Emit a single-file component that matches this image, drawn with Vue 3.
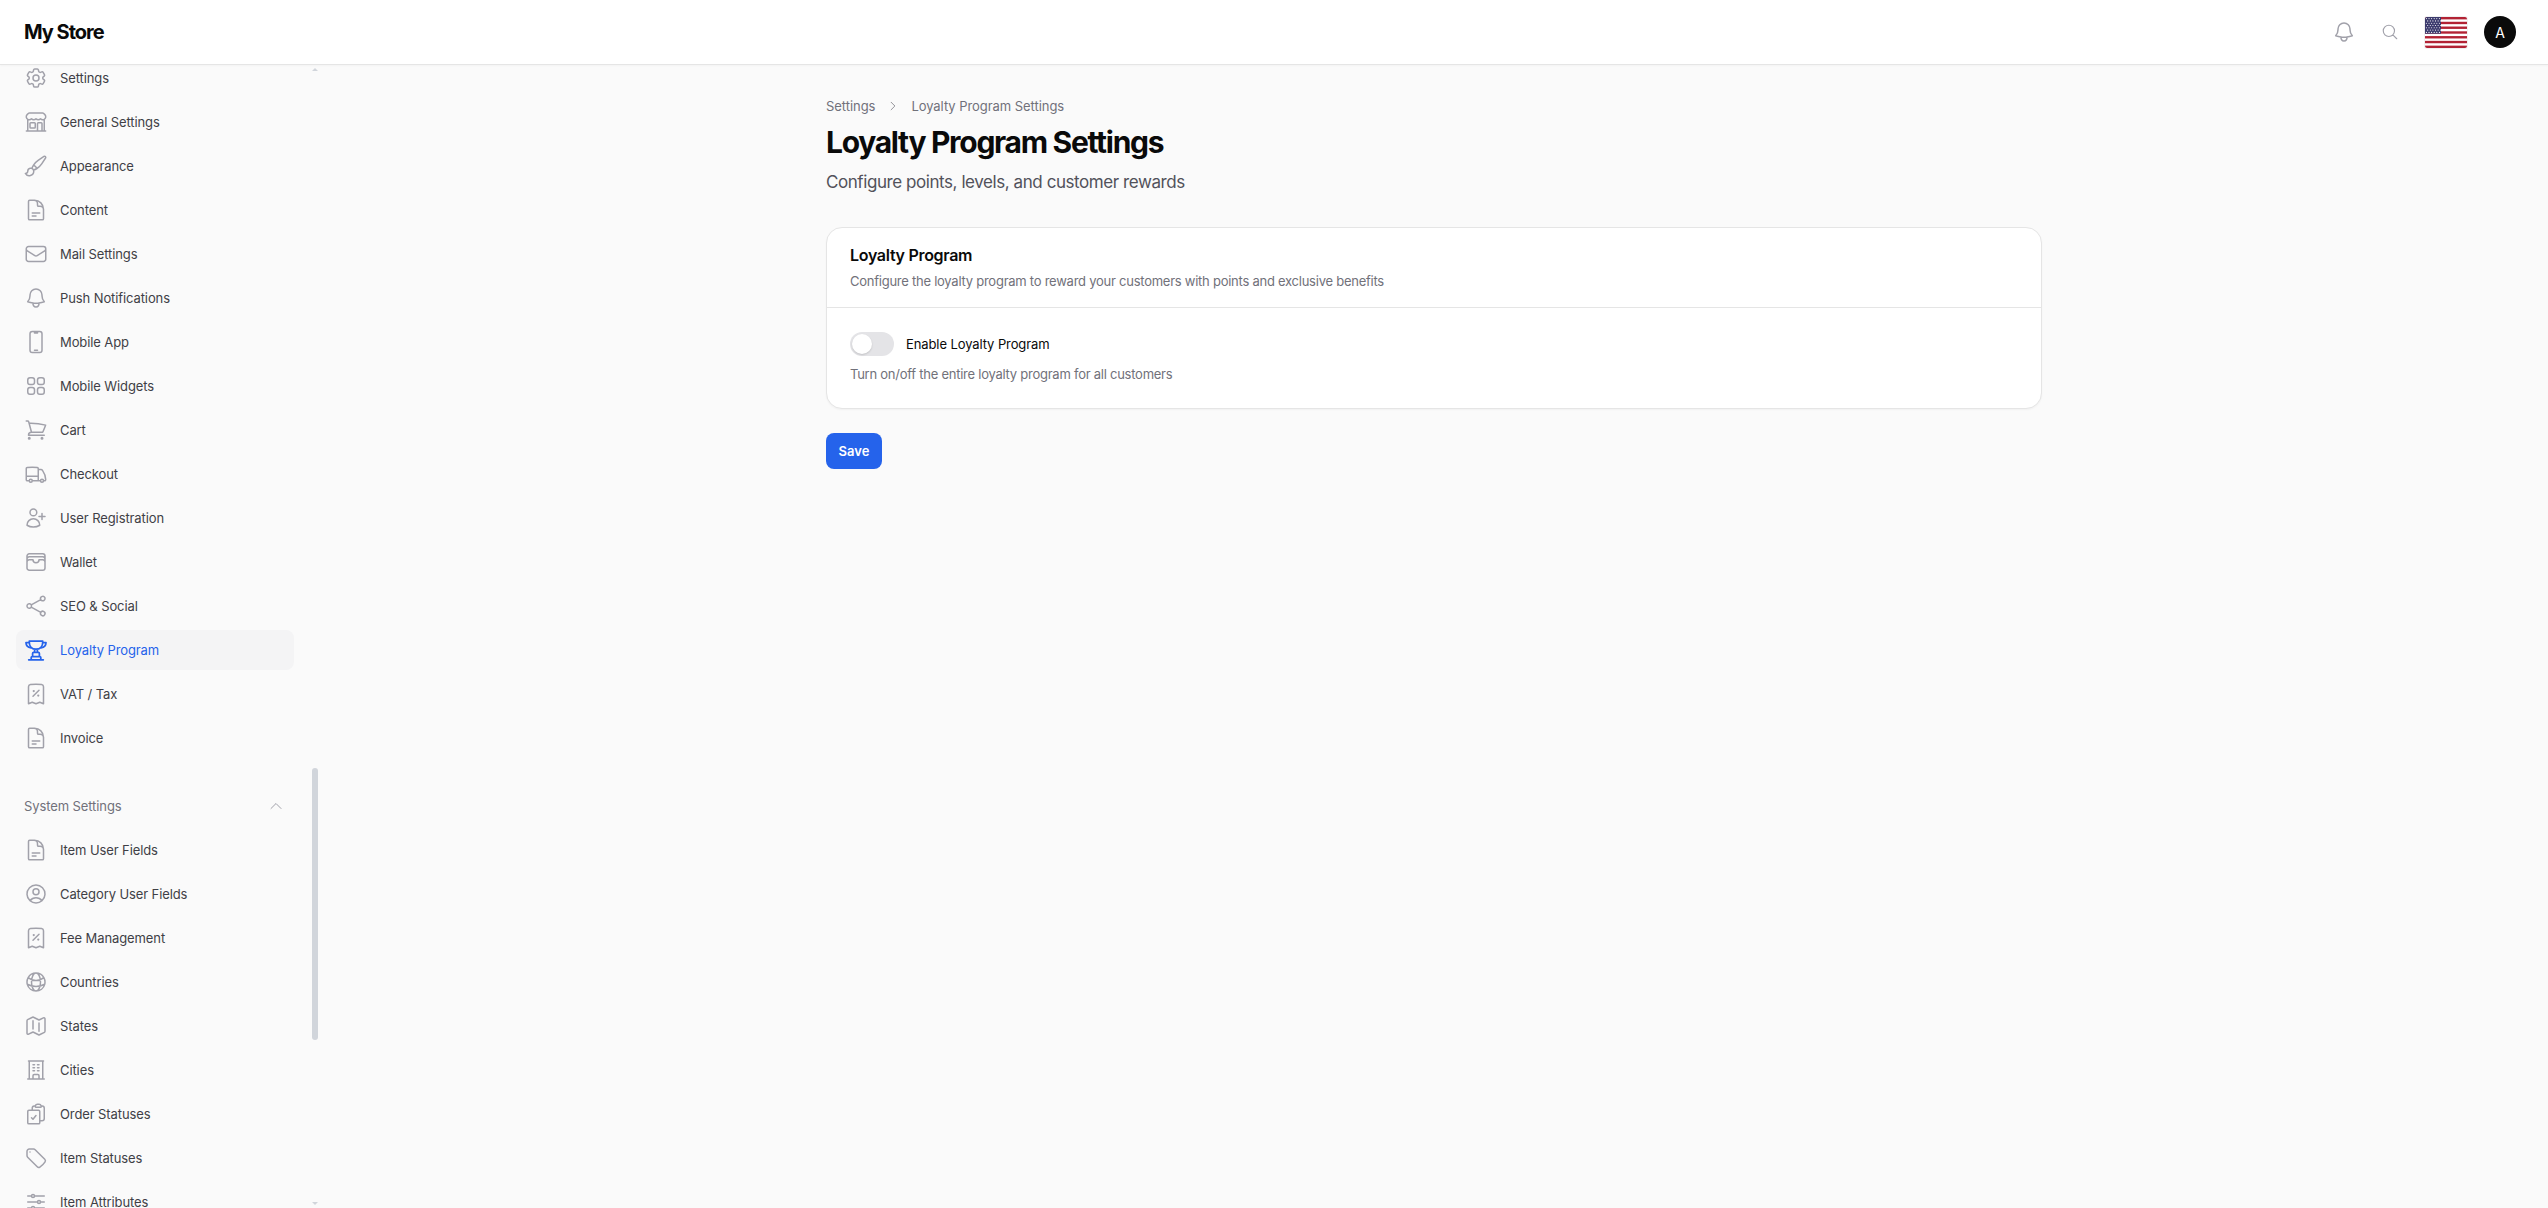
<template>
  <div class="layout">
    <header class="topbar">
      <div class="brand">My Store</div>
      <div class="top-actions">
        <svg class="icon bell" viewBox="0 0 24 24"><path :d="icons.bell[0]" /></svg>
        <svg class="icon search" viewBox="0 0 24 24"><path d="m21 21-5.197-5.197m0 0A7.5 7.5 0 1 0 5.196 5.196a7.5 7.5 0 0 0 10.607 10.607Z" /></svg>
        <svg class="flag" viewBox="0 0 42 31" preserveAspectRatio="none">
          <rect width="42" height="31" fill="#fff" />
          <rect v-for="n in 7" :key="n" x="0" :y="(n - 1) * 4.77" width="42" height="2.38" fill="#b22234" />
          <rect width="16" height="16.7" fill="#3c3b6e" />
          <g fill="#fff">
            <template v-for="r in 7" :key="r">
              <circle v-for="c in 6" :key="c" :cx="1.4 + (c - 1) * 2.6 + (r % 2 ? 0 : 1.3)" :cy="1.6 + (r - 1) * 2.3" r="0.55" />
            </template>
          </g>
        </svg>
        <div class="avatar">A</div>
      </div>
    </header>

    <div class="body-row">
      <aside class="sidebar">
        <nav class="nav">
          <a
            v-for="item in settingsItems"
            :key="item.label"
            class="nav-item"
            :class="{ active: item.active }"
          >
            <svg class="icon" viewBox="0 0 24 24"><path v-for="d in item.paths" :key="d" :d="d" /></svg>
            <span>{{ item.label }}</span>
          </a>

          <div class="section-title">
            <span>System Settings</span>
            <svg class="icon chevron" viewBox="0 0 24 24"><path d="m4.5 15.75 7.5-7.5 7.5 7.5" /></svg>
          </div>

          <a v-for="item in systemItems" :key="item.label" class="nav-item">
            <svg class="icon" viewBox="0 0 24 24"><path v-for="d in item.paths" :key="d" :d="d" /></svg>
            <span>{{ item.label }}</span>
          </a>
        </nav>

        <!-- fake scrollbar, sits over the list -->
        <div class="scroll-up"></div>
        <div class="scroll-thumb"></div>
        <div class="scroll-down"></div>
      </aside>

      <main class="main">
        <div class="breadcrumb">
          <span>Settings</span>
          <svg class="icon crumb-sep" viewBox="0 0 24 24"><path d="m8.25 4.5 7.5 7.5-7.5 7.5" /></svg>
          <span>Loyalty Program Settings</span>
        </div>
        <h1 class="page-title">Loyalty Program Settings</h1>
        <p class="page-sub">Configure points, levels, and customer rewards</p>

        <section class="card">
          <div class="card-head">
            <h2>Loyalty Program</h2>
            <p>Configure the loyalty program to reward your customers with points and exclusive benefits</p>
          </div>
          <div class="card-body">
            <div class="switch-row">
              <button class="switch" :class="{ on: enabled }" @click="enabled = !enabled">
                <span class="knob"></span>
              </button>
              <span class="switch-label">Enable Loyalty Program</span>
            </div>
            <p class="help">Turn on/off the entire loyalty program for all customers</p>
          </div>
        </section>

        <button class="save">Save</button>
      </main>
    </div>
  </div>
</template>

<script setup>
import { ref } from 'vue'

const enabled = ref(false)

const icons = {
  cog: ['M9.594 3.94c.09-.542.56-.94 1.11-.94h2.593c.55 0 1.02.398 1.11.94l.213 1.281c.063.374.313.686.645.87.074.04.147.083.22.127.325.196.72.257 1.075.124l1.217-.456a1.125 1.125 0 0 1 1.37.49l1.296 2.247a1.125 1.125 0 0 1-.26 1.431l-1.003.827c-.293.241-.438.613-.43.992a7.723 7.723 0 0 1 0 .255c-.008.378.137.75.43.991l1.004.827c.424.35.534.955.26 1.43l-1.298 2.247a1.125 1.125 0 0 1-1.369.491l-1.217-.456c-.355-.133-.75-.072-1.076.124a6.47 6.47 0 0 1-.22.128c-.331.183-.581.495-.644.869l-.213 1.281c-.09.543-.56.94-1.11.94h-2.594c-.55 0-1.019-.398-1.11-.94l-.213-1.281c-.062-.374-.312-.686-.644-.87a6.52 6.52 0 0 1-.22-.127c-.325-.196-.72-.257-1.076-.124l-1.217.456a1.125 1.125 0 0 1-1.369-.49l-1.297-2.247a1.125 1.125 0 0 1 .26-1.431l1.004-.827c.292-.24.437-.613.43-.991a6.932 6.932 0 0 1 0-.255c.007-.38-.138-.751-.43-.992l-1.004-.827a1.125 1.125 0 0 1-.26-1.43l1.297-2.247a1.125 1.125 0 0 1 1.37-.491l1.216.456c.356.133.751.072 1.076-.124.072-.044.146-.086.22-.128.332-.183.582-.495.644-.869l.214-1.28Z', 'M15 12a3 3 0 1 1-6 0 3 3 0 0 1 6 0Z'],
  store: ['M13.5 21v-7.5a.75.75 0 0 1 .75-.75h3a.75.75 0 0 1 .75.75V21m-4.5 0H2.36m11.14 0H18m0 0h3.64m-1.39 0V9.349M3.75 21V9.349m0 0a3.001 3.001 0 0 0 3.75-.615A2.993 2.993 0 0 0 9.75 9.75c.896 0 1.7-.393 2.25-1.016a2.993 2.993 0 0 0 2.25 1.016c.896 0 1.7-.393 2.25-1.015a3.001 3.001 0 0 0 3.75.614m-16.5 0a3.004 3.004 0 0 1-.621-4.72l1.189-1.19A1.5 1.5 0 0 1 5.378 3h13.243a1.5 1.5 0 0 1 1.06.44l1.19 1.189a3 3 0 0 1-.621 4.72M6.75 18h3.75a.75.75 0 0 0 .75-.75V13.5a.75.75 0 0 0-.75-.75H6.75a.75.75 0 0 0-.75.75v3.75c0 .414.336.75.75.75Z'],
  brush: ['M9.53 16.122a3 3 0 0 0-5.78 1.128 2.25 2.25 0 0 1-2.4 2.245 4.5 4.5 0 0 0 8.4-2.245c0-.399-.078-.78-.22-1.128Zm0 0a15.998 15.998 0 0 0 3.388-1.62m-5.043-.025a15.994 15.994 0 0 1 1.622-3.395m3.42 3.42a15.995 15.995 0 0 0 4.764-4.648l3.876-5.814a1.151 1.151 0 0 0-1.597-1.597L14.146 6.32a15.996 15.996 0 0 0-4.649 4.763m3.42 3.42a6.776 6.776 0 0 0-3.42-3.42'],
  doc: ['M19.5 14.25v-2.625a3.375 3.375 0 0 0-3.375-3.375h-1.5A1.125 1.125 0 0 1 13.5 7.125v-1.5a3.375 3.375 0 0 0-3.375-3.375H8.25m0 12.75h7.5m-7.5 3H12M10.5 2.25H5.625c-.621 0-1.125.504-1.125 1.125v17.25c0 .621.504 1.125 1.125 1.125h12.75c.621 0 1.125-.504 1.125-1.125V11.25a9 9 0 0 0-9-9Z'],
  mail: ['M21.75 6.75v10.5a2.25 2.25 0 0 1-2.25 2.25h-15a2.25 2.25 0 0 1-2.25-2.25V6.75m19.5 0A2.25 2.25 0 0 0 19.5 4.5h-15a2.25 2.25 0 0 0-2.25 2.25m19.5 0v.243a2.25 2.25 0 0 1-1.07 1.916l-7.5 4.615a2.25 2.25 0 0 1-2.36 0L3.32 8.91a2.25 2.25 0 0 1-1.07-1.916V6.75'],
  bell: ['M14.857 17.082a23.848 23.848 0 0 0 5.454-1.31A8.967 8.967 0 0 1 18 9.75V9A6 6 0 0 0 6 9v.75a8.967 8.967 0 0 1-2.312 6.022c1.733.64 3.56 1.085 5.455 1.31m5.714 0a24.255 24.255 0 0 1-5.714 0m5.714 0a3 3 0 1 1-5.714 0'],
  phone: ['M10.5 1.5H8.25A2.25 2.25 0 0 0 6 3.75v16.5a2.25 2.25 0 0 0 2.25 2.25h7.5A2.25 2.25 0 0 0 18 20.25V3.75a2.25 2.25 0 0 0-2.25-2.25H13.5m-3 0V3h3V1.5m-3 0h3m-3 18.75h3'],
  widgets: ['M3.75 6A2.25 2.25 0 0 1 6 3.75h2.25A2.25 2.25 0 0 1 10.5 6v2.25a2.25 2.25 0 0 1-2.25 2.25H6a2.25 2.25 0 0 1-2.25-2.25V6ZM3.75 15.75A2.25 2.25 0 0 1 6 13.5h2.25a2.25 2.25 0 0 1 2.25 2.25V18a2.25 2.25 0 0 1-2.25 2.25H6A2.25 2.25 0 0 1 3.75 18v-2.25ZM13.5 6a2.25 2.25 0 0 1 2.25-2.25H18A2.25 2.25 0 0 1 20.25 6v2.25A2.25 2.25 0 0 1 18 10.5h-2.25a2.25 2.25 0 0 1-2.25-2.25V6ZM13.5 15.75a2.25 2.25 0 0 1 2.25-2.25H18a2.25 2.25 0 0 1 2.25 2.25V18A2.25 2.25 0 0 1 18 20.25h-2.25A2.25 2.25 0 0 1 13.5 18v-2.25Z'],
  cart: ['M2.25 3h1.386c.51 0 .955.343 1.087.835l.383 1.437M7.5 14.25a3 3 0 0 0-3 3h15.75m-12.75-3h11.218c1.121-2.3 2.1-4.684 2.924-7.138a60.114 60.114 0 0 0-16.536-1.84M7.5 14.25 5.106 5.272M6 20.25a.75.75 0 1 1-1.5 0 .75.75 0 0 1 1.5 0Zm12.75 0a.75.75 0 1 1-1.5 0 .75.75 0 0 1 1.5 0Z'],
  truck: ['M8.25 18.75a1.5 1.5 0 0 1-3 0m3 0a1.5 1.5 0 0 0-3 0m3 0h6m-9 0H3.375a1.125 1.125 0 0 1-1.125-1.125V14.25m17.25 4.5a1.5 1.5 0 0 1-3 0m3 0a1.5 1.5 0 0 0-3 0m3 0h1.125c.621 0 1.129-.504 1.09-1.124a17.902 17.902 0 0 0-3.213-9.193 2.056 2.056 0 0 0-1.58-.86H14.25M16.5 18.75h-2.25m0-11.177v-.958c0-.568-.422-1.048-.987-1.106a48.554 48.554 0 0 0-10.026 0 1.106 1.106 0 0 0-.987 1.106v7.635m12-6.677v6.677m0 4.5v-4.5m0 0h-12'],
  userPlus: ['M18 7.5v3m0 0v3m0-3h3m-3 0h-3m-2.25-4.125a3.375 3.375 0 1 1-6.75 0 3.375 3.375 0 0 1 6.75 0ZM3 19.235v-.11a6.375 6.375 0 0 1 12.75 0v.109A12.318 12.318 0 0 1 9.374 21c-2.331 0-4.512-.645-6.374-1.766Z'],
  wallet: ['M21 12a2.25 2.25 0 0 0-2.25-2.25H15a3 3 0 1 1-6 0H5.25A2.25 2.25 0 0 0 3 12m18 0v6a2.25 2.25 0 0 1-2.25 2.25H5.25A2.25 2.25 0 0 1 3 18v-6m18 0V9M3 12V9m18 0a2.25 2.25 0 0 0-2.25-2.25H5.25A2.25 2.25 0 0 0 3 9m18 0V6a2.25 2.25 0 0 0-2.25-2.25H5.25A2.25 2.25 0 0 0 3 6v3'],
  share: ['M7.217 10.907a2.25 2.25 0 1 0 0 2.186m0-2.186c.18.324.283.696.283 1.093s-.103.77-.283 1.093m0-2.186 9.566-5.314m-9.566 7.5 9.566 5.314m0 0a2.25 2.25 0 1 0 3.935 2.186 2.25 2.25 0 0 0-3.935-2.186Zm0-12.814a2.25 2.25 0 1 0 3.933-2.185 2.25 2.25 0 0 0-3.933 2.185Z'],
  trophy: ['M4.7 21.75h14.6M7.2 21.75v-2.2c0-.6.4-1 1-1h7.6c.6 0 1 .4 1 1v2.2M8.6 18.5v-3c0-.7.5-1.2 1.2-1.2h4.4c.7 0 1.2.5 1.2 1.2v3M10.1 14.3c.5-1 .7-2 .7-3.1M13.9 14.3c-.5-1-.7-2-.7-3.1M5.3 3h13.4v1.5c0 3.8-2.6 6.7-6.7 6.7s-6.7-2.9-6.7-6.7V3ZM5.3 4.5H2c0 2.9 2.1 5 5 5.4M18.7 4.5H22c0 2.9-2.1 5-5 5.4'],
  receipt: ['M9 14.25l6-6m4.5-3.493V21.75l-3.75-1.5-3.75 1.5-3.75-1.5-3.75 1.5V4.757c0-1.108.806-2.057 1.907-2.185a48.507 48.507 0 0 1 11.186 0c1.1.128 1.907 1.077 1.907 2.185ZM9.75 9h.008v.008H9.75V9Zm.375 0a.375.375 0 1 1-.75 0 .375.375 0 0 1 .75 0Zm4.125 4.5h.008v.008h-.008V13.5Zm.375 0a.375.375 0 1 1-.75 0 .375.375 0 0 1 .75 0Z'],
  userCircle: ['M17.982 18.725A7.488 7.488 0 0 0 12 15.75a7.488 7.488 0 0 0-5.982 2.975m11.963 0a9 9 0 1 0-11.963 0m11.963 0A8.966 8.966 0 0 1 12 21a8.966 8.966 0 0 1-5.982-2.275M15 9.75a3 3 0 1 1-6 0 3 3 0 0 1 6 0Z'],
  globe: ['M12 21a9.004 9.004 0 0 0 8.716-6.747M12 21a9.004 9.004 0 0 1-8.716-6.747M12 21c2.485 0 4.5-4.03 4.5-9S14.485 3 12 3m0 18c-2.485 0-4.5-4.03-4.5-9S9.515 3 12 3m0 0a8.997 8.997 0 0 1 7.843 4.582M12 3a8.997 8.997 0 0 0-7.843 4.582m15.686 0A11.953 11.953 0 0 1 12 10.5c-2.998 0-5.74-1.1-7.843-2.918m15.686 0A8.959 8.959 0 0 1 21 12c0 .778-.099 1.533-.284 2.253m0 0A17.919 17.919 0 0 1 12 16.5c-3.162 0-6.133-.815-8.716-2.247m0 0A9.015 9.015 0 0 1 3 12c0-1.605.42-3.113 1.157-4.418'],
  map: ['M9 6.75V15m6-6v8.25m.503 3.498 4.875-2.437c.381-.19.622-.58.622-1.006V4.82c0-.836-.88-1.38-1.628-1.006l-3.869 1.934c-.317.159-.69.159-1.006 0L9.503 3.252a1.125 1.125 0 0 0-1.006 0L3.622 5.689C3.24 5.88 3 6.27 3 6.695V19.18c0 .836.88 1.38 1.628 1.006l3.869-1.934c.317-.159.69-.159 1.006 0l4.994 2.497c.317.158.69.158 1.006 0Z'],
  office: ['M3.75 21h16.5M4.5 3h15M5.25 3v18m13.5-18v18M9 6.75h1.5m-1.5 3h1.5m-1.5 3h1.5m3-6H15m-1.5 3H15m-1.5 3H15M9 21v-3.375c0-.621.504-1.125 1.125-1.125h3.75c.621 0 1.125.504 1.125 1.125V21'],
  clipboard: ['M11.35 3.836c-.065.21-.1.433-.1.664 0 .414.336.75.75.75h4.5a.75.75 0 0 0 .75-.75 2.25 2.25 0 0 0-.1-.664m-5.8 0A2.251 2.251 0 0 1 13.5 2.25H15c1.012 0 1.867.668 2.15 1.586m-5.8 0c-.376.023-.75.05-1.124.08C9.095 4.01 8.25 4.973 8.25 6.108V8.25m8.9-4.414c.376.023.75.05 1.124.08 1.131.094 1.976 1.057 1.976 2.192V16.5A2.25 2.25 0 0 1 18 18.75h-2.25m-7.5-10.5H4.875c-.621 0-1.125.504-1.125 1.125v11.25c0 .621.504 1.125 1.125 1.125h9.75c.621 0 1.125-.504 1.125-1.125V18.75m-7.5-10.5h6.375c.621 0 1.125.504 1.125 1.125v9.375m-8.25-3 1.5 1.5 3-3.75'],
  tag: ['M9.568 3H5.25A2.25 2.25 0 0 0 3 5.25v4.318c0 .597.237 1.17.659 1.591l9.581 9.581c.699.699 1.78.872 2.607.33a18.095 18.095 0 0 0 5.223-5.223c.542-.827.369-1.908-.33-2.607L11.16 3.66A2.25 2.25 0 0 0 9.568 3Z', 'M6 6h.008v.008H6V6Z'],
  sliders: ['M10.5 6h9.75M10.5 6a1.5 1.5 0 1 1-3 0m3 0a1.5 1.5 0 1 0-3 0M3.75 6H7.5m3 12h9.75m-9.75 0a1.5 1.5 0 0 1-3 0m3 0a1.5 1.5 0 0 0-3 0m-3.75 0H7.5m9-6h3.75m-3.75 0a1.5 1.5 0 0 1-3 0m3 0a1.5 1.5 0 0 0-3 0m-9.75 0h9.75']
}

const settingsItems = [
  { label: 'Settings', paths: icons.cog },
  { label: 'General Settings', paths: icons.store },
  { label: 'Appearance', paths: icons.brush },
  { label: 'Content', paths: icons.doc },
  { label: 'Mail Settings', paths: icons.mail },
  { label: 'Push Notifications', paths: icons.bell },
  { label: 'Mobile App', paths: icons.phone },
  { label: 'Mobile Widgets', paths: icons.widgets },
  { label: 'Cart', paths: icons.cart },
  { label: 'Checkout', paths: icons.truck },
  { label: 'User Registration', paths: icons.userPlus },
  { label: 'Wallet', paths: icons.wallet },
  { label: 'SEO & Social', paths: icons.share },
  { label: 'Loyalty Program', paths: icons.trophy, active: true },
  { label: 'VAT / Tax', paths: icons.receipt },
  { label: 'Invoice', paths: icons.doc }
]

const systemItems = [
  { label: 'Item User Fields', paths: icons.doc },
  { label: 'Category User Fields', paths: icons.userCircle },
  { label: 'Fee Management', paths: icons.receipt },
  { label: 'Countries', paths: icons.globe },
  { label: 'States', paths: icons.map },
  { label: 'Cities', paths: icons.office },
  { label: 'Order Statuses', paths: icons.clipboard },
  { label: 'Item Statuses', paths: icons.tag },
  { label: 'Item Attributes', paths: icons.sliders }
]
</script>

<style>
html, body {
  margin: 0;
  height: 100%;
  overflow: hidden;
  background: #fafafa;
}
</style>

<style scoped>
.layout {
  height: 100vh;
  display: flex;
  flex-direction: column;
  background: #fafafa;
  color: #0a0a0a;
  font-family: Inter, "Liberation Sans", sans-serif;
  overflow: hidden;
}

/* Top bar */
.topbar {
  height: 64px;
  flex-shrink: 0;
  background: #fff;
  border-bottom: 1px solid #e5e5e5;
  box-shadow: 0 1px 2px rgba(0, 0, 0, 0.03);
  display: flex;
  align-items: center;
  justify-content: space-between;
  padding: 0 32px 0 24px;
  position: relative;
  z-index: 2;
}

.brand {
  font-size: 20px;
  font-weight: 700;
  letter-spacing: -1px;
  color: #0a0a0a;
}

.top-actions {
  display: flex;
  align-items: center;
}

.icon {
  width: 24px;
  height: 24px;
  flex-shrink: 0;
  fill: none;
  stroke: #a1a1aa;
  stroke-width: 1.5;
  stroke-linecap: round;
  stroke-linejoin: round;
}

.bell {
  margin-right: 25px;
}

.search {
  width: 18px;
  height: 18px;
  margin-right: 26px;
}

.flag {
  width: 42px;
  height: 31px;
  border-radius: 2px;
  margin-right: 17px;
  box-shadow: 0 0 0 1px rgba(0, 0, 0, 0.06);
}

.avatar {
  width: 32px;
  height: 32px;
  border-radius: 50%;
  background: #0a0a0a;
  color: #fff;
  font-size: 14px;
  display: flex;
  align-items: center;
  justify-content: center;
}

.body-row {
  flex: 1;
  min-height: 0;
  display: flex;
}

/* Sidebar */
.sidebar {
  width: 320px;
  flex-shrink: 0;
  position: relative;
  overflow: hidden;
}

.nav {
  margin-top: -7px;
  padding: 0 26px 0 16px;
}

.nav-item {
  height: 40px;
  margin-bottom: 4px;
  padding: 0 8px;
  border-radius: 8px;
  display: flex;
  align-items: center;
  gap: 12px;
  font-size: 13px;
  letter-spacing: -0.1px;
  color: #3f3f46;
}

.nav-item.active {
  background: #f4f4f5;
  color: #2563eb;
}

.nav-item.active .icon {
  stroke: #2563eb;
  stroke-width: 1.75;
}

.section-title {
  height: 20px;
  margin: 38px 0 14px;
  padding: 0 8px;
  display: flex;
  align-items: center;
  justify-content: space-between;
  font-size: 13px;
  letter-spacing: -0.1px;
  color: #71717a;
}

.chevron {
  width: 16px;
  height: 16px;
  margin-right: 2px;
}

.scroll-thumb {
  position: absolute;
  left: 312px;
  top: 703px;
  width: 6px;
  height: 272px;
  border-radius: 3px;
  background: #d1d5db;
}

.scroll-up,
.scroll-down {
  position: absolute;
  left: 312px;
  width: 0;
  height: 0;
  border-left: 3px solid transparent;
  border-right: 3px solid transparent;
}

.scroll-up {
  top: 3px;
  border-bottom: 3px solid #d1d5db;
}

.scroll-down {
  bottom: 3px;
  border-top: 3px solid #d1d5db;
}

/* Main content */
.main {
  flex: 1;
  min-width: 0;
  max-width: 1280px;
  margin: 0 auto;
  padding: 31px 32px 32px;
  box-sizing: border-box;
}

.breadcrumb {
  height: 20px;
  display: flex;
  align-items: center;
  gap: 12px;
  font-size: 13px;
  letter-spacing: -0.05px;
  color: #71717a;
}

.crumb-sep {
  width: 12px;
  height: 12px;
  stroke: #71717a;
}

.page-title {
  margin: 8px 0 0;
  font-size: 30px;
  line-height: 36px;
  font-weight: 700;
  letter-spacing: -1.3px;
  color: #0a0a0a;
}

.page-sub {
  margin: 8px 0 0;
  font-size: 17px;
  line-height: 28px;
  letter-spacing: -0.43px;
  color: #52525b;
}

.card {
  margin-top: 31px;
  background: #fff;
  border: 1px solid #e5e5e5;
  border-radius: 16px;
  box-shadow: 0 1px 2px rgba(0, 0, 0, 0.04);
}

.card-head {
  padding: 15px 23px 16px;
  border-bottom: 1px solid #e5e5e5;
}

.card-head h2 {
  margin: 0;
  font-size: 16px;
  line-height: 24px;
  font-weight: 600;
  letter-spacing: -0.3px;
  color: #0a0a0a;
}

.card-head p {
  margin: 4px 0 0;
  font-size: 13px;
  line-height: 20px;
  letter-spacing: -0.25px;
  color: #71717a;
}

.card-body {
  padding: 24px 23px;
}

.switch-row {
  display: flex;
  align-items: center;
  gap: 12px;
}

.switch {
  width: 44px;
  height: 24px;
  padding: 2px;
  border: 0;
  border-radius: 12px;
  background: #e4e4e7;
  display: flex;
  cursor: pointer;
}

.switch.on {
  background: #2563eb;
  justify-content: flex-end;
}

.knob {
  width: 20px;
  height: 20px;
  border-radius: 50%;
  background: #fff;
  box-shadow: 0 1px 2px rgba(0, 0, 0, 0.15);
}

.switch-label {
  font-size: 13px;
  letter-spacing: -0.1px;
  color: #0a0a0a;
}

.help {
  margin: 8px 0 0;
  font-size: 13px;
  line-height: 20px;
  letter-spacing: -0.25px;
  color: #71717a;
}

.save {
  display: block;
  margin-top: 24px;
  width: 56px;
  height: 36px;
  border: 0;
  border-radius: 8px;
  background: #2563eb;
  color: #fff;
  font-family: inherit;
  font-size: 13px;
  font-weight: 600;
  cursor: pointer;
}
</style>
